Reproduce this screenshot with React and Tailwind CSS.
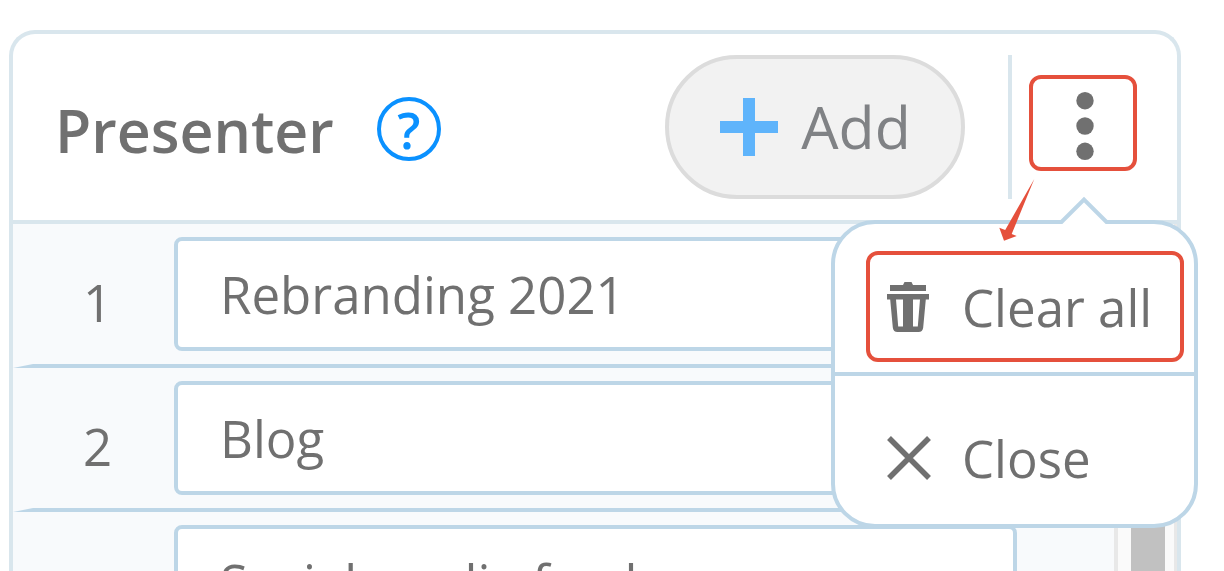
import React, { useState } from 'react';

const initialItems = ['Rebranding 2021', 'Blog', 'Social media feed'];

function PlusIcon() {
  return (
    <svg width="60" height="60" viewBox="0 0 60 60" fill="#5fb4fb" aria-hidden="true">
      <path d="M24 1h12v23h23v12H36v23H24V36H1V24h23z" />
    </svg>
  );
}

function DotsIcon() {
  return (
    <svg width="22" height="72" viewBox="0 0 22 72" fill="#707070" aria-hidden="true">
      <circle cx="13" cy="10.7" r="8.7" />
      <circle cx="13" cy="36" r="8.7" />
      <circle cx="13" cy="61.300" r="8.7" />
    </svg>
  );
}

function TrashIcon() {
  return (
    <svg width="42" height="52" viewBox="0 0 42 52" fill="#707070" aria-hidden="true">
      <path d="M3 4h13l1.5-3h7L26 4h13v6H3z" />
      <path
        fillRule="evenodd"
        d="M0 13h42v5.5h-3.2L36.200 46.500Q35.600 51 31.500 51h-21Q6.400 51 5.800 46.500L3.200 18.500H0zM9 18.500L11.200 45.500H16V18.500zM26 18.500V45.500h4.800L33 18.500z"
      />
    </svg>
  );
}

function CloseIcon() {
  return (
    <svg width="44" height="44" viewBox="0 0 44 44" stroke="#707070" strokeWidth="5.5" aria-hidden="true">
      <path d="M2 2l40 40M42 2L2 42" />
    </svg>
  );
}

export default function App() {
  const [items, setItems] = useState(initialItems);
  const [menuOpen, setMenuOpen] = useState(true);

  const handleAdd = () => setItems((prev) => [...prev, '']);

  const handleChange = (index, value) => {
    setItems((prev) => prev.map((item, i) => (i === index ? value : item)));
  };

  const handleClear = () => {
    setItems([]);
    setMenuOpen(false);
  };

  return (
    <div className="h-screen overflow-hidden bg-white pt-[30px] pl-[9px] pr-[43px] font-['Open_Sans',sans-serif] text-[51px] leading-[72px] text-[#707070]">
      <section className="flex h-full flex-col rounded-t-[26px] border-4 border-b-0 border-[#d9e6ed]">
        {/* Header */}
        <header className="flex items-center justify-between border-b-4 border-[#d9e6ed] py-[21px] pr-10 pl-[42px]">
          <div className="flex items-center gap-[43px] pt-1">
            <h1 className="pt-0.5 text-[59px] font-semibold">Presenter</h1>
            <button
              type="button"
              aria-label="Help"
              className="flex size-16 items-center justify-center rounded-full border-4 border-[#0a91ff] text-[51px] font-semibold text-[#0a91ff]"
            >
              ?
            </button>
          </div>

          <div className="flex items-center">
            <button
              type="button"
              onClick={handleAdd}
              className="flex h-36 w-[300px] items-center justify-center gap-[22px] rounded-full border-4 border-[#dcdcdc] bg-[#f2f2f2] text-[59px] text-[#808285]"
            >
              <PlusIcon />
              <span className="pb-0.5">Add</span>
            </button>
            <div className="ml-[43px] h-36 w-1 bg-[#d9e6ed]" />

            {/* More menu */}
            <div className="relative ml-[17px] pb-2">
              <button
                type="button"
                aria-label="More options"
                aria-expanded={menuOpen}
                onClick={() => setMenuOpen(!menuOpen)}
                className="flex h-24 w-[108px] items-center justify-center rounded-xl border-4 border-[#e5503c] pt-1.5"
              >
                <DotsIcon />
              </button>

              {menuOpen && (
                <div className="absolute top-[145px] right-[-61px] z-10 w-[367px] rounded-[44px] border-4 border-[#bdd6e7] bg-white">
                  <svg
                    className="absolute -top-7 right-[86px]"
                    width="48"
                    height="30"
                    viewBox="0 0 48 30"
                    fill="none"
                    aria-hidden="true"
                  >
                    <path d="M1 30V26L24 3L47 26V30z" fill="#fff" />
                    <path d="M0 26H1.500L24 3.500L46.500 26H48" stroke="#bdd6e7" strokeWidth="4" />
                  </svg>
                  <svg
                    className="absolute -top-[46px] left-[163px]"
                    width="38"
                    height="64"
                    viewBox="0 0 38 64"
                    fill="#e5503c"
                    aria-hidden="true"
                  >
                    <path d="M36.300 1L13.700 56L18.700 58L6 62.700L1.300 49.700L7.200 52z" />
                  </svg>
                  <div className="border-b-4 border-[#bdd6e7] pt-[27px] pr-[10px] pb-[10px] pl-[31px]">
                    <button
                      type="button"
                      onClick={handleClear}
                      className="flex h-[111px] w-full items-center gap-[33px] rounded-xl border-4 border-[#e5503c] pl-[17px]"
                    >
                      <TrashIcon />
                      Clear all
                    </button>
                  </div>
                  <button
                    type="button"
                    onClick={() => setMenuOpen(false)}
                    className="flex h-[148px] w-full items-center gap-[31px] pt-4 pl-[52px]"
                  >
                    <CloseIcon />
                    Close
                  </button>
                </div>
              )}
            </div>
          </div>
        </header>

        {/* List */}
        <div className="flex min-h-0 flex-1 overflow-hidden bg-[#f8fafc]">
          <ol className="min-w-0 flex-1">
            {items.map((item, index) => (
              <li
                key={index}
                className="flex items-center border-b-4 border-l-[20px] border-b-[#bdd6e7] border-l-transparent py-[13px] pr-[97px]"
              >
                <label htmlFor={`item-${index}`} className="w-[141px] pt-4 pr-3 text-center">
                  {index + 1}
                </label>
                <input
                  id={`item-${index}`}
                  type="text"
                  value={item}
                  onChange={(e) => handleChange(index, e.target.value)}
                  className="h-[114px] min-w-0 flex-1 rounded-lg border-4 border-[#bdd6e7] bg-white px-[42px] outline-none"
                />
              </li>
            ))}
          </ol>
          {/* Scrollbar track */}
          <div className="flex w-[63px] border-r-[3px] border-l-4 border-[#e8e8e8] bg-[#fafafa] pl-[13px]">
            <div className="w-[34px] bg-[#c1c1c1]" />
          </div>
        </div>
      </section>
    </div>
  );
}
